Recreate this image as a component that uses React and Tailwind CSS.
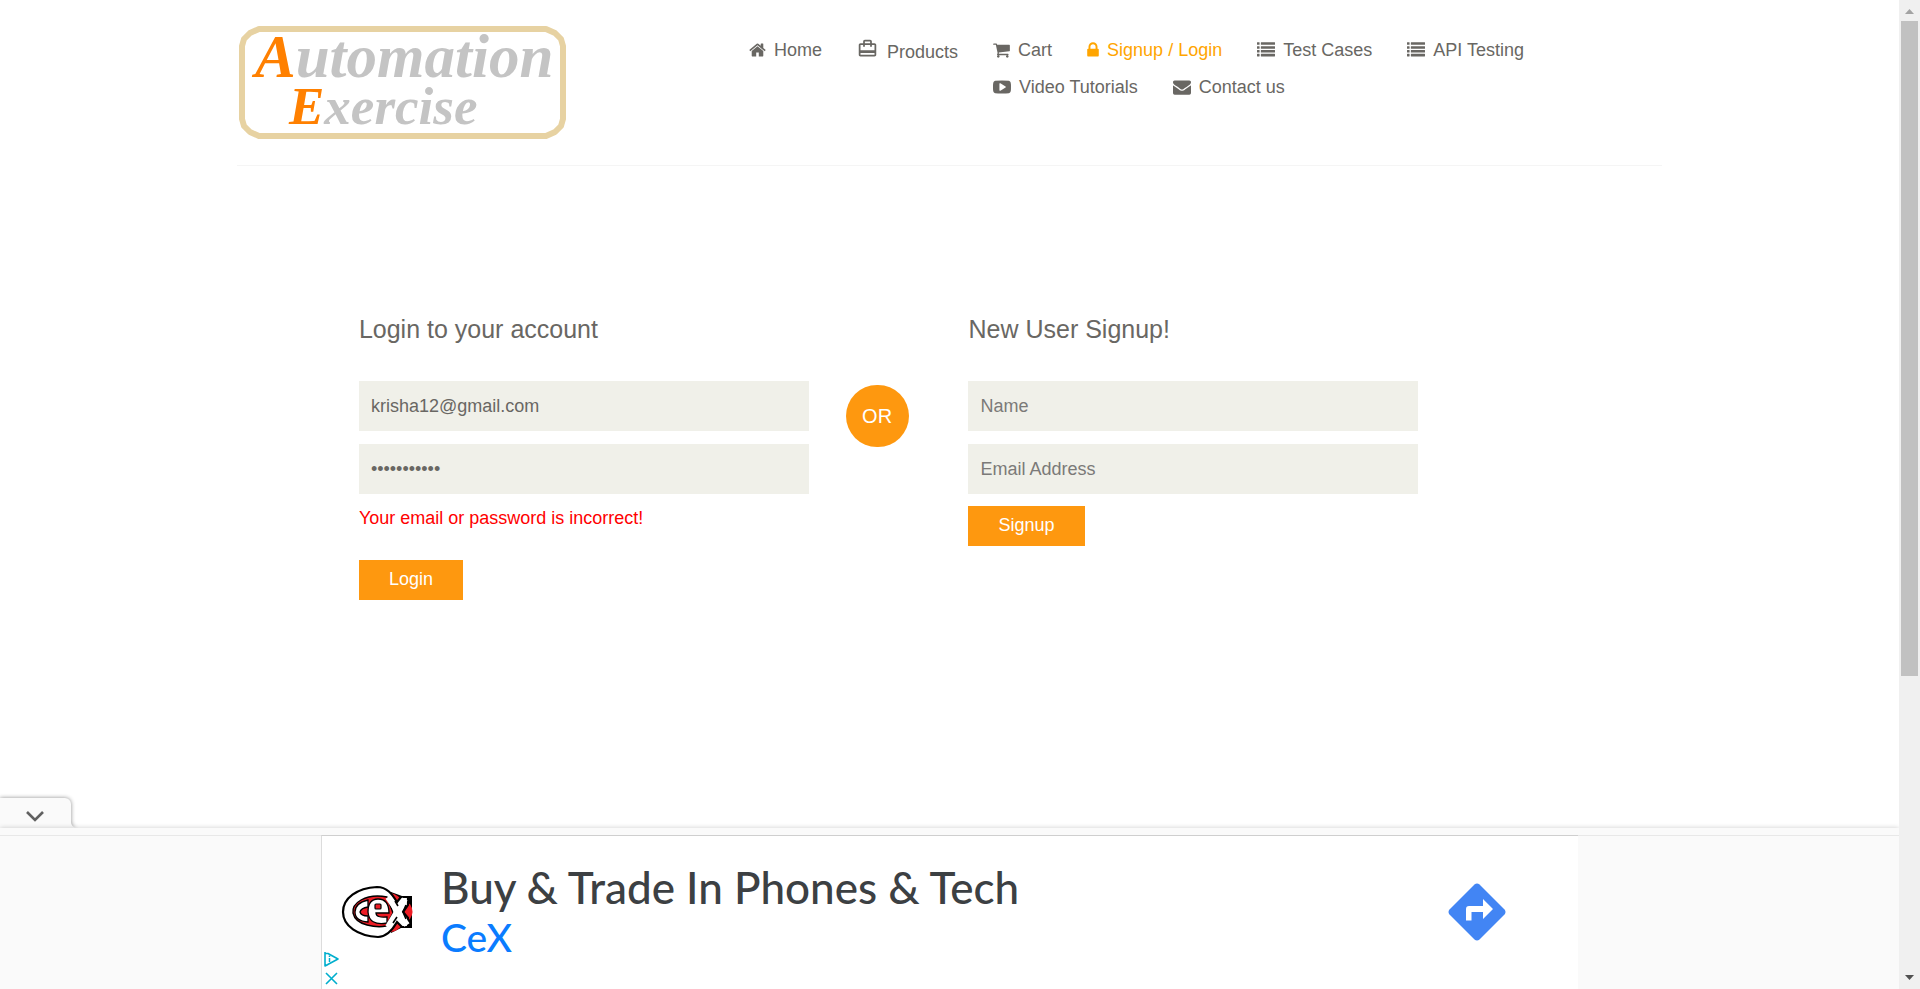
import { MdCardTravel } from 'react-icons/md';

const ICONS = {
  home: {
    box: '64 0 1664 1792',
    size: 'w-[17px]',
    d: 'M1472 992v480q0 26-19 45t-45 19h-384v-384h-256v384h-384q-26 0-45-19t-19-45v-480q0-1 .5-3t.5-3l575-474 575 474q1 2 1 6zm223-69l-62 74q-8 9-21 11h-3q-13 0-21-7l-692-577-692 577q-12 8-24 7-13-2-21-11l-62-74q-8-10-7-23.5t11-21.5l719-599q32-26 76-26t76 26l244 204v-195q0-14 9-23t23-9h192q14 0 23 9t9 23v408l219 182q10 8 11 21.5t-7 23.5z',
  },
  cart: {
    box: '64 0 1664 1792',
    size: 'w-[17px]',
    d: 'M704 1536q0 52-38 90t-90 38-90-38-38-90 38-90 90-38 90 38 38 90zm896 0q0 52-38 90t-90 38-90-38-38-90 38-90 90-38 90 38 38 90zm128-1088v512q0 24-16.5 42.5t-40.5 21.5l-1044 122q13 60 13 70 0 16-24 64h920q26 0 45 19t19 45-19 45-45 19h-1024q-26 0-45-19t-19-45q0-11 8-31.5t16-36 21.5-40 15.5-29.5l-177-823h-204q-26 0-45-19t-19-45 19-45 45-19h256q16 0 28.5 6.5t19.5 15.5 13 24.5 8 26 5.5 29.5 4.5 26h1201q26 0 45 19t19 45z',
  },
  lock: {
    box: '320 0 1152 1792',
    size: 'w-3',
    d: 'M640 768h512v-192q0-106-75-181t-181-75-181 75-75 181v192zm832 96v576q0 40-28 68t-68 28h-960q-40 0-68-28t-28-68v-576q0-40 28-68t68-28h32v-192q0-184 132-316t316-132 316 132 132 316v192h32q40 0 68 28t28 68z',
  },
  list: {
    box: '0 0 1792 1792',
    size: 'w-[18px]',
    d: 'M32 128h192q32 0 32 32v192q0 32-32 32h-192q-32 0-32-32v-192q0-32 32-32zM32 512h192q32 0 32 32v192q0 32-32 32h-192q-32 0-32-32v-192q0-32 32-32zM32 896h192q32 0 32 32v192q0 32-32 32h-192q-32 0-32-32v-192q0-32 32-32zM32 1280h192q32 0 32 32v192q0 32-32 32h-192q-32 0-32-32v-192q0-32 32-32zM416 128h1344q32 0 32 32v192q0 32-32 32h-1344q-32 0-32-32v-192q0-32 32-32zM416 512h1344q32 0 32 32v192q0 32-32 32h-1344q-32 0-32-32v-192q0-32 32-32zM416 896h1344q32 0 32 32v192q0 32-32 32h-1344q-32 0-32-32v-192q0-32 32-32zM416 1280h1344q32 0 32 32v192q0 32-32 32h-1344q-32 0-32-32v-192q0-32 32-32z',
  },
  video: {
    box: '0 0 1792 1792',
    size: 'w-[18px]',
    d: 'M1280 896q0-37-30-54l-512-320q-31-20-65-2-33 18-33 56v640q0 38 33 56 16 8 31 8 20 0 34-10l512-320q30-17 30-54zm512 0q0 96-1 150t-8.5 136.5-22.5 147.5q-16 73-69 123t-124 58q-222 25-671 25t-671-25q-71-8-124.5-58t-69.5-123q-14-65-21.5-147.5t-8.5-136.5-1-150 1-150 8.5-136.5 22.5-147.5q16-73 69-123t124-58q222-25 671-25t671 25q71 8 124.5 58t69.5 123q14 65 21.5 147.5t8.5 136.5 1 150z',
  },
  envelope: {
    box: '0 0 1792 1792',
    size: 'w-[18px]',
    d: 'M1792 710v794q0 66-47 113t-113 47h-1472q-66 0-113-47t-47-113v-794q44 49 101 87 362 246 497 345 57 42 92.5 65.5t94.5 48 110 24.5h2q51 0 110-24.5t94.5-48 92.5-65.5q170-123 498-345 57-39 100-87zm0-294q0 79-49 151t-122 123q-376 261-468 325-10 7-42.5 31t-54 38.5-52 32.5-57.5 27-50 9h-2q-23 0-50-9t-57.5-27-52-32.5-54-38.5-42.5-31q-91-64-262-182.5t-205-142.5q-62-42-117-115.5t-55-136.5q0-78 41.5-130t118.5-52h1472q65 0 112.5 47t47.5 113z',
  },
};

function Icon({ name }) {
  const icon = ICONS[name];
  return (
    <svg viewBox={icon.box} className={`h-[18px] shrink-0 ${icon.size}`} fill="currentColor" aria-hidden="true">
      <path fillRule="evenodd" d={icon.d} />
    </svg>
  );
}

function NavItem({ icon, children, active = false }) {
  return (
    <li>
      <a href="#" className={`flex items-center gap-2 leading-6 ${active ? 'text-[#ffa500]' : 'text-[#696763]'}`}>
        <Icon name={icon} />
        {children}
      </a>
    </li>
  );
}

function Logo() {
  return (
    <svg viewBox="0 0 328 114" className="h-[114px] w-[328px] overflow-visible" role="img" aria-label="Automation Exercise">
      <path
        d="M20 3H307L316 7L322 13L324 20V93L322 100L316 106L307 110H20L11 106L5 100L3 93V20L5 13L11 7Z"
        fill="#fff"
        stroke="#e7d2a2"
        strokeWidth="6"
        strokeLinejoin="round"
      />
      <g fontFamily="'Liberation Serif', serif" fontStyle="italic" fontWeight="700" fill="#c4c4c4">
        <text x="16" y="51" fontSize="61">
          <tspan fill="#ff8000">A</tspan>utomation
        </text>
        <text x="50" y="98" fontSize="53">
          <tspan fill="#ff8000">E</tspan>xercise
        </text>
      </g>
    </svg>
  );
}

function Header() {
  return (
    <header className="border-b border-[#f5f5f5] pt-[26px] pb-[25px]">
      <div className="flex items-start justify-between">
        <a href="#" className="pl-0.5">
          <Logo />
        </a>
        <nav aria-label="Main" className="flex w-[913px] gap-[35px] pt-3">
          <ul className="flex shrink-0 gap-[35px]">
            <NavItem icon="home">Home</NavItem>
            <li>
              <a href="#" className="flex gap-[9px] text-[#696763]">
                <MdCardTravel className="h-[21px] w-[21px]" aria-hidden="true" />
                <span className="pt-0.5 leading-6">Products</span>
              </a>
            </li>
          </ul>
          <ul className="flex flex-wrap gap-x-[35px] gap-y-[13px]">
            <NavItem icon="cart">Cart</NavItem>
            <NavItem icon="lock" active>Signup / Login</NavItem>
            <NavItem icon="list">Test Cases</NavItem>
            <NavItem icon="list">API Testing</NavItem>
            <NavItem icon="video">Video Tutorials</NavItem>
            <NavItem icon="envelope">Contact us</NavItem>
          </ul>
        </nav>
      </div>
    </header>
  );
}

function Field(props) {
  return (
    <input
      {...props}
      aria-label={props.placeholder}
      className="h-[50px] w-full bg-[#f0f0e9] px-3 text-[#696763] outline-none placeholder:text-[#7b7a78]"
    />
  );
}

function Submit({ children }) {
  return (
    <button type="submit" className="h-10 self-start bg-[#fe980f] px-[30px] pb-0.5 text-white">
      {children}
    </button>
  );
}

function Forms() {
  return (
    <main className="-mx-[19px] grid grid-cols-12 pt-[149px]">
      <section className="col-span-4 col-start-2 px-[19px]">
        <h2 className="mb-[38px] text-[25px] leading-7">Login to your account</h2>
        <form className="flex flex-col" onSubmit={(e) => e.preventDefault()}>
          <div className="flex flex-col gap-[13px]">
            <Field type="email" placeholder="Email Address" defaultValue="krisha12@gmail.com" />
            <Field type="password" placeholder="Password" defaultValue="exercise123" />
          </div>
          <p className="mt-3 mb-[30px] leading-6 text-[#ff0000]">Your email or password is incorrect!</p>
          <Submit>Login</Submit>
        </form>
      </section>
      <div className="px-[18px] pt-[70px]">
        <p className="flex h-[62px] w-[63px] items-center justify-center rounded-full bg-[#fe980f] text-xl text-white">OR</p>
      </div>
      <section className="col-span-4 px-[19px]">
        <h2 className="mb-[38px] text-[25px] leading-7">New User Signup!</h2>
        <form className="flex flex-col gap-3" onSubmit={(e) => e.preventDefault()}>
          <div className="flex flex-col gap-[13px]">
            <Field type="text" placeholder="Name" />
            <Field type="email" placeholder="Email Address" />
          </div>
          <Submit>Signup</Submit>
        </form>
      </section>
    </main>
  );
}

function CexLogo() {
  return (
    <svg viewBox="0 0 74 54" className="h-[54px] w-[74px] shrink-0" role="img" aria-label="CeX">
      <path d="M50 7L61 11H71V43H60L50 48Z" fill="#000" />
      <path d="M50 8Q58 10 62 17L69 19Q74 27 69 34L62 39Q57 46 50 47Z" fill="#ed1c24" />
      <path d="M36 2C16 3 2 13 2 27S17 51 37 52C46 52 52 44 56 37L61 42H67V33L62 27L67 20V12H60L56 17C51 9 46 2 36 2Z" fill="#fff" stroke="#000" strokeWidth="2.2" />
      <path d="M46 12Q31 9 20 15Q11 20 12 28Q14 37 26 40Q37 43 45 41L52 28Z" fill="#ed1c24" stroke="#000" strokeWidth="1.4" />
      <path d="M27 15Q14 18 14 27T27 37L27 31Q20 31 19 27Q20 23 27 22Z" fill="#fff" stroke="#000" strokeWidth="1.3" />
      <path d="M48 28H35Q35 33 46 32V38Q28 41 27 27Q27 14 37 14Q48 14 48 28Z" fill="#fff" stroke="#000" strokeWidth="1.3" />
      <rect x="34" y="19" width="6" height="5" rx="1" fill="#ed1c24" stroke="#000" strokeWidth="1.2" />
      <path d="M47 12L58 28L66 40M64 14L56 27L47 42" fill="none" stroke="#fff" strokeWidth="6" />
      <path d="M65 20L62 27L65 34M54 16L57 21M52 38L56 32" fill="none" stroke="#000" strokeWidth="1.6" />
    </svg>
  );
}

function Advert() {
  return (
    <footer className="flex flex-col">
      <button type="button" aria-label="Hide advertisement" className="self-start">
        <svg viewBox="0 0 80 31" className="block h-[31px] w-20 overflow-visible">
          <path
            d="M0 1H65A6 6 0 0 1 71 7V25A6 6 0 0 0 77 31H0Z"
            className="fill-[#fafafa] drop-shadow-[0_0_2px_rgba(0,0,0,0.45)]"
          />
          <path d="M27 15L35 23L43 15" fill="none" stroke="#616161" strokeWidth="2.6" />
        </svg>
      </button>
      <div className="relative h-[7px] bg-[#fafafa] shadow-[0_0_5px_rgba(0,0,0,0.2)]" />
      <div className="relative flex justify-center border-t border-[#e8e8e8] bg-[#fafafa]">
        <div className="-mt-px flex h-[154px] w-[1257px] border-t border-l border-t-[#cfcfcf] border-l-[#dcdcdc] bg-white">
          <div className="flex w-[119px] flex-col">
            <a href="#" className="mt-[49px] ml-[19px]">
              <CexLogo />
            </a>
            <div className="mt-3 ml-0.5 flex flex-col items-start gap-1 text-[#00aecd]">
              <a href="#" aria-label="Ad choices">
                <svg viewBox="0 0 16 16" className="block h-4 w-4" fill="none" stroke="currentColor" strokeWidth="1.6">
                  <path d="M1 1V15L14 8L4 2.500H1M1 15L4 13.500" strokeLinejoin="round" />
                  <path d="M5.500 7V11M5.500 4.500V6" strokeWidth="1.500" />
                </svg>
              </a>
              <button type="button" aria-label="Close advertisement">
                <svg viewBox="0 0 16 16" className="block h-4 w-4" fill="none" stroke="currentColor" strokeWidth="1.6">
                  <path d="M2 2L13 13M13 2L2 13" />
                </svg>
              </button>
            </div>
          </div>
          <div className="flex flex-1 flex-col pt-[23px] font-['Lato',sans-serif]">
            <a href="#" className="text-[44px] leading-[56px] font-medium text-[#3c4043]">Buy &amp; Trade In Phones &amp; Tech</a>
            <a href="#" className="text-[39px] leading-[44px] font-medium text-[#0a7cff]">CeX</a>
          </div>
          <a href="#" aria-label="Directions" className="mt-[47px] mr-[72px] self-start">
            <svg viewBox="0 0 58 58" className="block h-[58px] w-[58px]">
              <path d="M26.500 1.500Q29 -.5 31.500 1.500L56.500 26.500Q58.500 29 56.500 31.500L31.500 56.500Q29 58.500 26.500 56.500L1.500 31.500Q-.5 29 1.500 26.500Z" fill="#4285f4" />
              <path d="M18 37.500V26Q18 23 21 23H35V16L45 26L35 36V29H23.500V37.500Z" fill="#fff" />
            </svg>
          </a>
        </div>
      </div>
    </footer>
  );
}

function Scrollbar() {
  return (
    <div className="flex w-[21px] shrink-0 flex-col items-center bg-[#f0f0f0]" aria-hidden="true">
      <svg viewBox="0 0 21 21" className="h-[21px] w-[21px]">
        <path d="M6 14L10.500 9L15 14Z" fill="#a3a3a3" />
      </svg>
      <div className="h-[655px] w-[17px] bg-[#c1c1c1]" />
      <svg viewBox="0 0 21 21" className="mt-auto h-[21px] w-[21px]">
        <path d="M6 7H15L10.500 12Z" fill="#505050" />
      </svg>
    </div>
  );
}

export default function App() {
  return (
    <div className="flex min-h-screen bg-white font-['Liberation_Sans',Arial,sans-serif] text-[18px] text-[#696763]">
      <div className="flex min-w-0 flex-1 flex-col overflow-hidden">
        <div className="mx-auto w-full max-w-[1463px] flex-1 px-[19px]">
          <Header />
          <Forms />
        </div>
        <Advert />
      </div>
      <Scrollbar />
    </div>
  );
}
